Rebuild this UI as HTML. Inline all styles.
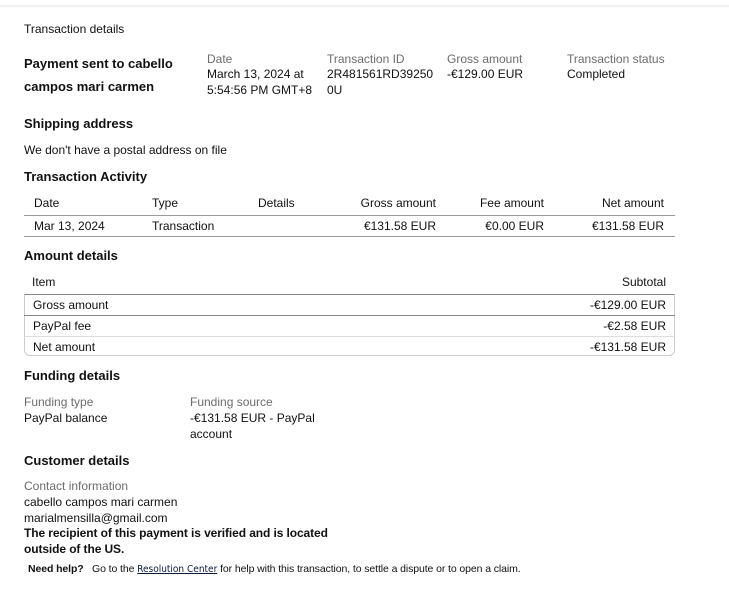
<!DOCTYPE html>
<html><head><meta charset="utf-8"><style>
*{margin:0;padding:0;box-sizing:border-box}
body{width:729px;height:611px;background:#fff;font-family:"Liberation Sans",Arial,sans-serif;font-size:12px;color:#111;position:relative;overflow:hidden}
.a{position:absolute;white-space:nowrap;line-height:16px}
.b{font-weight:bold;font-size:13px}
.g{color:#6c6c6c}
.r{text-align:right}
.hl{position:absolute;height:1px;background:#999}
</style></head><body>
<div style="position:absolute;left:0;top:5px;width:729px;height:2px;background:#f1f1f1"></div>
<div class="a" style="left:24px;top:21px">Transaction details</div>
<div class="a b" style="left:24px;top:52px;line-height:23px">Payment sent to cabello<br>campos mari carmen</div>
<div class="a g" style="left:207px;top:51px">Date</div>
<div class="a" style="left:207px;top:66px">March 13, 2024 at<br>5:54:56 PM GMT+8</div>
<div class="a g" style="left:327px;top:51px">Transaction ID</div>
<div class="a" style="left:327px;top:66px">2R481561RD39250<br>0U</div>
<div class="a g" style="left:447px;top:51px">Gross amount</div>
<div class="a" style="left:447px;top:66px">-€129.00 EUR</div>
<div class="a g" style="left:567px;top:51px">Transaction status</div>
<div class="a" style="left:567px;top:66px">Completed</div>
<div class="a b" style="left:24px;top:116px">Shipping address</div>
<div class="a" style="left:24px;top:142px">We don't have a postal address on file</div>
<div class="a b" style="left:24px;top:169px">Transaction Activity</div>
<div class="a" style="left:34px;top:195px">Date</div>
<div class="a" style="left:152px;top:195px">Type</div>
<div class="a" style="left:258px;top:195px">Details</div>
<div class="a r" style="right:293px;top:195px">Gross amount</div>
<div class="a r" style="right:185px;top:195px">Fee amount</div>
<div class="a r" style="right:65px;top:195px">Net amount</div>
<div class="hl" style="left:24px;top:215px;width:651px"></div>
<div class="a" style="left:34px;top:218px">Mar 13, 2024</div>
<div class="a" style="left:152px;top:218px">Transaction</div>
<div class="a r" style="right:293px;top:218px">€131.58 EUR</div>
<div class="a r" style="right:185px;top:218px">€0.00 EUR</div>
<div class="a r" style="right:65px;top:218px">€131.58 EUR</div>
<div class="hl" style="left:24px;top:236px;width:651px"></div>
<div class="a b" style="left:24px;top:248px">Amount details</div>
<div class="a" style="left:32px;top:274px">Item</div>
<div class="a r" style="right:63px;top:274px">Subtotal</div>
<div style="position:absolute;left:24px;top:294px;width:651px;height:62px;border:1px solid #ccc;border-top:1px solid #888;border-radius:0 0 6px 6px"></div>
<div class="hl" style="left:24px;top:315px;width:651px;background:#888"></div>
<div class="hl" style="left:24px;top:336px;width:651px;background:#ddd"></div>
<div class="a" style="left:33px;top:297px">Gross amount</div>
<div class="a r" style="right:63px;top:297px">-€129.00 EUR</div>
<div class="a" style="left:33px;top:318px">PayPal fee</div>
<div class="a r" style="right:63px;top:318px">-€2.58 EUR</div>
<div class="a" style="left:33px;top:339px">Net amount</div>
<div class="a r" style="right:63px;top:339px">-€131.58 EUR</div>
<div class="a b" style="left:24px;top:368px">Funding details</div>
<div class="a g" style="left:24px;top:394px">Funding type</div>
<div class="a" style="left:24px;top:410px">PayPal balance</div>
<div class="a g" style="left:190px;top:394px">Funding source</div>
<div class="a" style="left:190px;top:410px">-€131.58 EUR - PayPal<br>account</div>
<div class="a b" style="left:24px;top:453px">Customer details</div>
<div class="a g" style="left:24px;top:478px">Contact information</div>
<div class="a" style="left:24px;top:494px">cabello campos mari carmen<br>marialmensilla@gmail.com</div>
<div class="a" style="left:24px;top:525px;font-weight:bold;letter-spacing:-0.1px">The recipient of this payment is verified and is located<br>outside of the US.</div>
<div class="a" style="left:28px;top:561px;font-size:10.5px;letter-spacing:-0.1px"><b>Need help?</b>&nbsp;&nbsp; Go to the <span style="text-decoration:underline;font-family:'DejaVu Sans Condensed','DejaVu Sans',sans-serif;font-size:10px;color:#0a1a3a;letter-spacing:0">Resolution Center</span> for help with this transaction, to settle a dispute or to open a claim.</div>
</body></html>
